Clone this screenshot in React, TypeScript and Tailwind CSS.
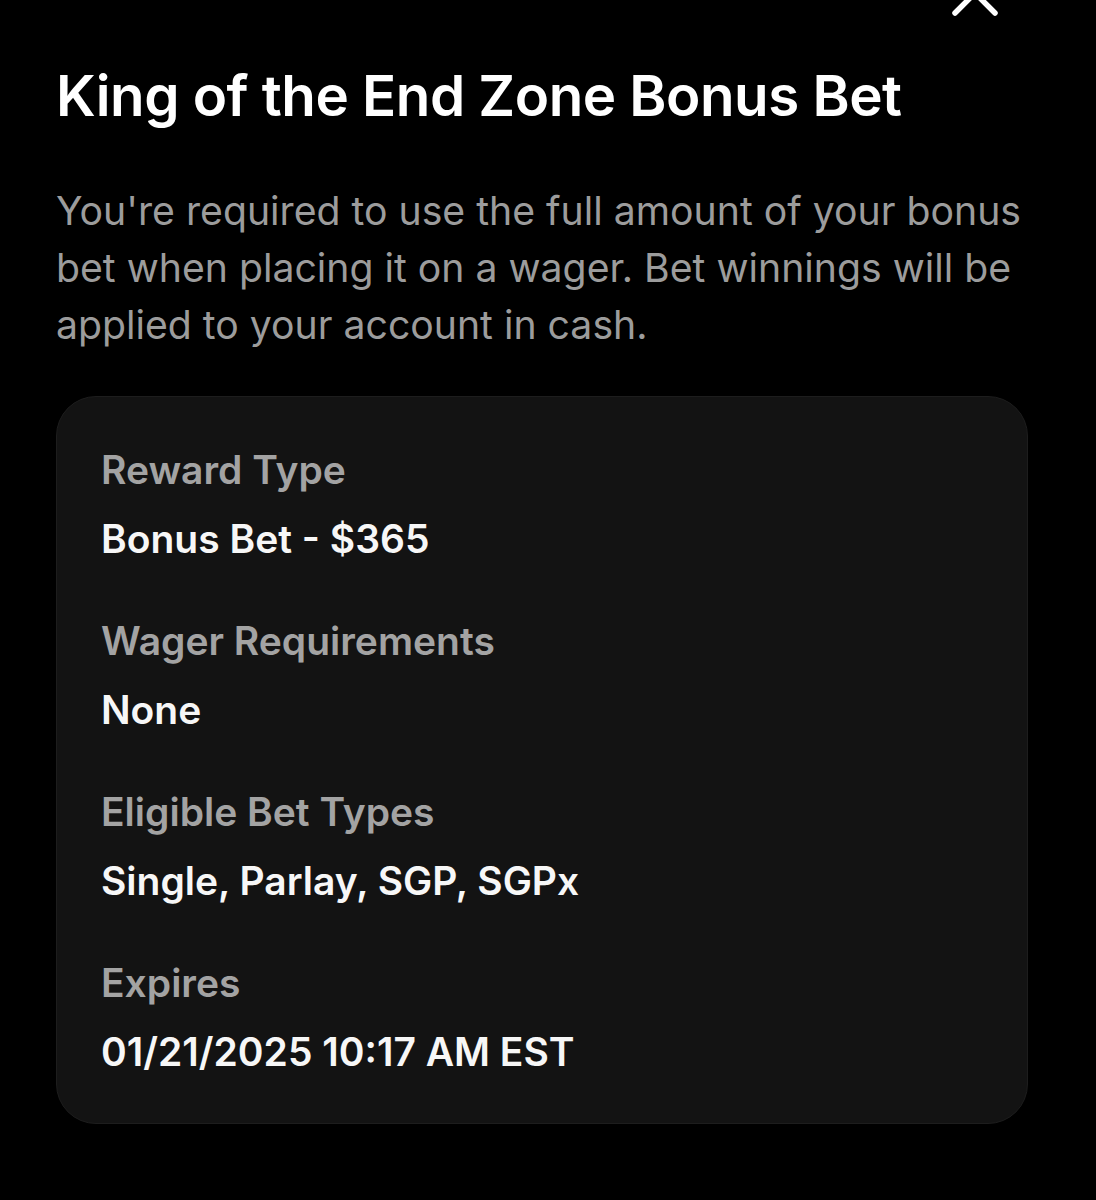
const details = [
  { label: "Reward Type", value: "Bonus Bet - $365" },
  { label: "Wager Requirements", value: "None" },
  { label: "Eligible Bet Types", value: "Single, Parlay, SGP, SGPx" },
  { label: "Expires", value: "01/21/2025 10:17 AM EST" },
];

function CloseIcon() {
  return (
    <svg width="56" height="56" viewBox="0 0 56 56" fill="none" className="absolute left-[947px] top-[-35px]">
      <path d="M8 8L48 48M48 8L8 48" stroke="#ffffff" strokeWidth="5.5" strokeLinecap="round" />
    </svg>
  );
}

export default function App() {
  return (
    <div className="relative min-h-[1200px] w-full overflow-hidden bg-black font-['Inter',sans-serif] text-white">
      <CloseIcon />
      <div className="pl-14 pr-[68px] pt-[64px]">
        <h1 className="text-[56.5px] font-semibold leading-[64px] tracking-[-0.5px] text-white">
          King of the End Zone Bonus Bet
        </h1>
        <p className="mt-[54px] text-[39.2px] leading-[57px] text-[#9c9c9c]">
          You're required to use the full amount of your bonus bet when placing it on a wager. Bet
          winnings will be applied to your account in cash.
        </p>

        <div className="mt-[43px] rounded-[40px] border border-[#1d1d1d] bg-[#131313] px-[44px] pt-[48px] pb-[46px]">
          <div className="flex flex-col gap-[52px]">
            {details.map((d) => (
              <div key={d.label} className="flex flex-col gap-[19px]">
                <div className="text-[39px] font-semibold leading-[50px] text-[#a3a3a3]">{d.label}</div>
                <div className="text-[39px] font-semibold leading-[50px] text-[#f7f7f7]">{d.value}</div>
              </div>
            ))}
          </div>
        </div>
      </div>
    </div>
  );
}
